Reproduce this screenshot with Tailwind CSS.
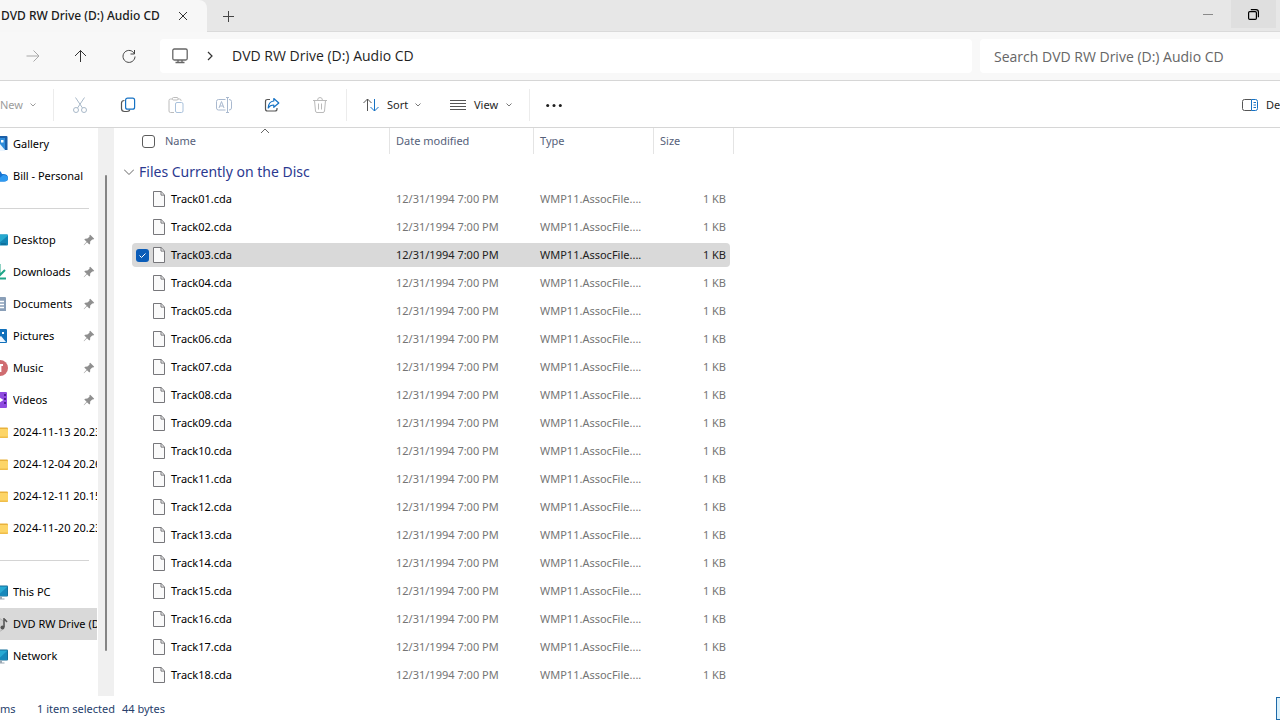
<!DOCTYPE html>
<html lang="en">
<head>
  <meta charset="UTF-8">
  <meta name="viewport" content="width=device-width, initial-scale=1.0">
  <title>DVD RW Drive (D:) Audio CD</title>
  <script src="https://cdn.jsdelivr.net/npm/@tailwindcss/browser@4"></script>
</head>
<body class="h-screen flex flex-col overflow-hidden bg-white text-black text-[11px] leading-4 font-['Noto_Sans','Open_Sans',sans-serif]">

  <!-- Shared icons -->
  <svg class="hidden">
    <symbol id="chev" viewBox="0 0 8 8"><path d="M1.500 2.500 4 5l2.500-2.500" fill="none" stroke="currentColor"/></symbol>
    <symbol id="pin" viewBox="0 0 12 12"><path d="M7.200.8 11.200 4.800 10.200 5.600 9.200 5.500 7.200 7.600 7.100 9.800 6.300 10.600 4 8.200 1 11.200.7 10.900 3.600 7.800 1.300 5.500 2.100 4.700 4.400 4.600 6.500 2.700 6.400 1.600z" fill="#8f8f8f"/></symbol>
    <symbol id="file" viewBox="0 0 14 18"><path d="M1.500 1.500h7.600l3.400 3.400v11.600h-11z" fill="#fafafa" stroke="#77777b"/><path d="M9 1.500v3.600h3.500" fill="none" stroke="#77777b"/></symbol>
    <symbol id="folder" viewBox="0 0 16 16"><path d="M0 3.500h15q1 0 1 1V7H0z" fill="#e9b23c"/><path d="M0 5h15q1 0 1 1v7q0 1-1 1H0z" fill="#fdd567"/><path d="M0 12.500h16q0 1.500-1 1.500H0z" fill="#f0bd4a"/></symbol>
    <symbol id="monitor" viewBox="0 0 16 16"><path d="M0 1.500h15q1 0 1 1v9q0 1-1 1H0z" fill="#156f99"/><path d="M0 2.500h15v9H0z" fill="#27a9d3"/><path d="M6 11.500 15 3v8.500z" fill="#1788bb"/><path d="M5 12.500h5v2h2.500v1H3v-1h2z" fill="#9aa8b3"/></symbol>
  </svg>

  <!-- Tabs -->
  <header class="h-8 shrink-0 flex bg-[#e7e7e7] border-b border-[#dadada]">
    <div class="w-[207px] h-8 flex items-center bg-[#f7f7f7] rounded-tr-lg pl-px">
      <span class="w-[159px] whitespace-nowrap text-[12px] font-medium text-[#1b1b1b]">DVD RW Drive (D:) Audio CD</span>
      <button class="w-12 flex items-center justify-center" aria-label="Close tab">
        <svg class="size-[10px]" viewBox="0 0 10 10" stroke="#333"><path d="M1 1l8 8M9 1 1 9"/></svg>
      </button>
    </div>
    <button class="w-[42px] flex items-center justify-center pt-px" aria-label="New tab">
      <svg class="size-[11px]" viewBox="0 0 11 11" stroke="#444"><path d="M5.500 0v11M0 5.500h11"/></svg>
    </button>
    <div class="ml-auto mr-1 h-7 flex">
      <button class="w-[46px] flex items-center justify-center" aria-label="Minimize">
        <svg class="size-[10px]" viewBox="0 0 10 10" stroke="#8a8a8a"><path d="M0 5.500h10"/></svg>
      </button>
      <button class="w-[45px] flex items-center justify-center bg-[#dfdfdf]" aria-label="Restore">
        <svg class="size-[11px]" viewBox="0 0 11 11" fill="none" stroke="#000" stroke-width="1.200"><rect x=".6" y="2.600" width="7.800" height="7.800" rx="1.200"/><path d="M2.800.6H8Q10.400.6 10.400 3v5.200"/></svg>
      </button>
    </div>
  </header>

  <!-- Navigation and address -->
  <nav class="h-[49px] shrink-0 flex items-center bg-[#f8f8f8] border-b border-[#d6d6d6] text-[14px] font-['Open_Sans','Noto_Sans',sans-serif]">
    <button class="w-8 ml-[17px] flex justify-center" aria-label="Forward">
      <svg class="size-[14px]" viewBox="0 0 14 14" fill="none" stroke="#a8a8a8"><path d="M.5 7h12.500M7.500 1.500 13 7l-5.500 5.500"/></svg>
    </button>
    <button class="w-8 ml-4 flex justify-center" aria-label="Up">
      <svg class="size-[14px]" viewBox="0 0 14 14" fill="none" stroke="#333"><path d="M6.500 13V1.500M1 7l5.500-5.500L12 7"/></svg>
    </button>
    <button class="w-8 ml-4 flex justify-center" aria-label="Refresh">
      <svg class="size-[14px]" viewBox="0 0 14 14" fill="none" stroke="#444"><path d="M12.500 5A6 6 0 1 0 13 7.500M12.500 1v4h-4"/></svg>
    </button>
    <div class="h-[34px] flex-1 ml-[15px] flex items-center bg-white rounded">
      <svg class="size-4 ml-3" viewBox="0 0 16 16" fill="none" stroke="#666"><rect x=".8" y="1" width="14.400" height="11" rx="1.500" stroke-width="1.300"/><path d="M6 12v2.500M10 12v2.500M3.500 14.500h9" stroke-width="1.300"/></svg>
      <svg class="w-[6px] h-[10px] ml-[19px]" viewBox="0 0 6 10" fill="none" stroke="#333" stroke-width="1.200"><path d="M1 1l4 4-4 4"/></svg>
      <span class="ml-[19px] text-[#1f1f1f]">DVD RW Drive (D:) Audio CD</span>
    </div>
    <input type="search" aria-label="Search" placeholder="Search DVD RW Drive (D:) Audio CD" class="h-[34px] w-[300px] ml-2 pl-[14px] bg-white rounded-l placeholder:text-[#666] outline-none">
  </nav>

  <!-- Commands -->
  <div class="h-[47px] shrink-0 flex items-center pt-[2px] border-b border-[#d6d6d6] text-[#1f1f1f]">
    <button class="w-[53px] flex items-center text-[#9c9c9c]"><span class="w-[29px] text-left">New</span><svg class="size-2"><use href="#chev"/></svg></button>
    <div class="w-px h-8 bg-[#ececec]"></div>
    <div class="w-[292px] flex pl-[2px]">
      <button class="w-12 flex justify-center" aria-label="Cut">
        <svg class="size-4" viewBox="0 0 16 16" fill="none" stroke="#a9b9c9"><path d="M3.500.5 10.500 11M12.500.5 5.500 11"/><circle cx="4" cy="13" r="2.500"/><circle cx="12" cy="13" r="2.500"/></svg>
      </button>
      <button class="w-12 flex justify-center" aria-label="Copy">
        <svg class="size-4" viewBox="0 0 16 16" fill="none" stroke-width="1.200"><path d="M4.500 3.500Q1.500 3.500 1.500 6v5.500q0 3 3 3H7q2.500 0 2.800-2" stroke="#555"/><rect x="5.600" y="1.200" width="9" height="11" rx="2" stroke="#1672c4"/></svg>
      </button>
      <button class="w-12 flex justify-center" aria-label="Paste">
        <svg class="size-4" viewBox="0 0 16 16" fill="none"><path d="M4.500 2H2.500Q1 2 1 3.500v10.500q0 1.500 1.500 1.500H6M10 2h1.500Q13 2 13 3.500V4" stroke="#bcbcbc"/><rect x="4.500" y=".5" width="5.500" height="2.500" rx="1" stroke="#bcbcbc"/><rect x="7.500" y="5.500" width="7.500" height="10" rx="1.500" stroke="#a9c1db"/></svg>
      </button>
      <button class="w-12 flex justify-center" aria-label="Rename">
        <svg class="size-4" viewBox="0 0 16 16" fill="none" stroke="#a9b9cf"><path d="M9.500 2.500h-7Q.5 2.500.5 4.500v6.500q0 2 2 2h7M13 2.500q2.500 0 2.500 2v6.500q0 2-2.500 2M11.500.5v15M10 .5h3M10 15.500h3M3 11l2.500-6.500L8 11M4 9h3"/></svg>
      </button>
      <button class="w-12 flex justify-center" aria-label="Share">
        <svg class="size-4" viewBox="0 0 16 16" fill="none" stroke-width="1.200"><path d="M6 2.500H3.500q-2 0-2 2V12q0 2 2 2H11q2 0 2-2v-1" stroke="#555"/><path d="M9.800 1.500 14.800 6l-5 4.300V8Q6 8 4.200 11 4.500 4.500 9.800 4z" stroke="#1672c4" stroke-linejoin="round"/></svg>
      </button>
      <button class="w-12 flex justify-center" aria-label="Delete">
        <svg class="size-4" viewBox="0 0 16 16" fill="none" stroke="#bababa"><path d="M1 3.500h14M5.500 3.500Q5.500.5 8 .5t2.500 3M2.500 3.500l1 10.500q.2 1.500 1.500 1.500h6q1.300 0 1.500-1.500l1-10.500M6.500 6.500v6M9.500 6.500v6"/></svg>
      </button>
    </div>
    <div class="w-px h-8 bg-[#ececec]"></div>
    <button class="w-[87px] flex items-center pl-4">
      <svg class="size-4" viewBox="0 0 16 16" fill="none"><path d="M4.500 14V2M.5 6l4-4 4 4" stroke="#555"/><path d="M11.500 2v12M7.500 10l4 4 4-4" stroke="#1672c4"/></svg>
      <span class="w-[27px] ml-2 text-left">Sort</span><svg class="size-2 text-[#777]"><use href="#chev"/></svg>
    </button>
    <button class="w-[95px] flex items-center pl-4">
      <svg class="size-4" viewBox="0 0 16 16" stroke="#555"><path d="M0 3.500h16M0 6.500h16M0 9.500h16M0 12.500h16"/></svg>
      <span class="w-[31px] ml-2 text-left">View</span><svg class="size-2 text-[#777]"><use href="#chev"/></svg>
    </button>
    <div class="w-px h-8 bg-[#ececec]"></div>
    <button class="ml-4" aria-label="See more">
      <svg class="size-4" viewBox="0 0 16 16" fill="#1f1f1f"><circle cx="1.700" cy="8.500" r="1.500"/><circle cx="8" cy="8.500" r="1.500"/><circle cx="14.300" cy="8.500" r="1.500"/></svg>
    </button>
    <button class="ml-auto w-[38px] overflow-hidden flex items-center gap-2">
      <svg class="size-4 shrink-0" viewBox="0 0 16 16" fill="none"><path d="M9.500 2.500h-7q-2 0-2 2v7q0 2 2 2h7" stroke="#555"/><path d="M9.500 2.500h4q2 0 2 2v7q0 2-2 2h-4zM11.500 5.500h2.500M11.500 8h2.500M11.500 10.500h2.500" stroke="#1672c4"/></svg>
      <span>Details</span>
    </button>
  </div>

  <main class="flex-1 min-h-0 flex">
    <!-- Sidebar -->
    <aside class="w-[97px] shrink-0 overflow-hidden">
      <ul id="places" class="-ml-2"></ul>
    </aside>
    <div class="w-4 ml-px shrink-0 bg-[#f0f0f0] flex justify-center pt-[47px]">
      <div class="w-[2px] h-[476px] bg-[#858585] rounded"></div>
    </div>

    <!-- File list -->
    <section class="flex-1 overflow-hidden">
      <table class="w-[620px] table-fixed text-left border-separate border-spacing-0">
        <thead>
          <tr class="h-[26px] text-[#56617a]">
            <th class="w-[276px] p-0 font-normal border-r border-[#e4e4e4]">
              <div class="relative flex items-center pl-7">
                <input type="checkbox" aria-label="Select all" class="appearance-none size-[13px] border border-[#5c5c5c] rounded-[3px] bg-white">
                <span class="ml-[10px]">Name</span>
                <svg class="absolute left-[146px] -top-[5px] w-[10px] h-[6px]" viewBox="0 0 10 6" fill="none" stroke="#666"><path d="M1 5l4-4 4 4"/></svg>
              </div>
            </th>
            <th class="w-[144px] p-0 pl-[6px] font-normal border-r border-[#e4e4e4]">Date modified</th>
            <th class="w-[120px] p-0 pl-[6px] font-normal border-r border-[#e4e4e4]">Type</th>
            <th class="w-[80px] p-0 pl-[6px] font-normal border-r border-[#e4e4e4]">Size</th>
          </tr>
        </thead>
        <tbody id="tracks">
          <tr class="h-[31px]">
            <td colspan="4" class="p-0">
              <div class="flex items-center pl-[10px] pt-1 text-[14px] leading-5 text-[#2b3990]">
                <svg class="w-[10px] h-[6px] mr-[5px]" viewBox="0 0 10 6" fill="none" stroke="#666"><path d="M0 .5l5 5 5-5"/></svg>
                Files Currently on the Disc
              </div>
            </td>
          </tr>
        </tbody>
      </table>
    </section>
  </main>

  <footer class="h-6 shrink-0 flex items-center pt-px text-[#27406b]">
    <span class="w-[37px]">ms</span>
    <span class="w-[85px] whitespace-nowrap">1 item selected</span>
    <span>44 bytes</span>
    <button class="ml-auto w-1 h-[23px] border border-r-0 border-[#1d69a8] bg-[#d9f0fb]" aria-label="Details view"></button>
  </footer>

<script>
  const icons = {
    gallery: '<path d="M3 0h11.500q1 0 1 1v13H3z" fill="#1a5fa8"/><path d="M0 2h13v13H0z" fill="#2f8ddb"/><path d="M9 4h2.500v2.500H9z" fill="#fff"/><path d="M2 15l6-7 5 6v1z" fill="#e8f4ff"/>',
    cloud: '<path d="M0 4Q7-1 10 6q6-.5 6 4 0 3.500-4 3.500H0z" fill="#1673d1"/><path d="M4 13.500 11 7q5 0 5 3.500 0 3-4 3z" fill="#2f9af0"/>',
    desktop: '<path d="M0 2.500h15q1 0 1 1v9q0 1-1 1H0z" fill="#1285b5"/><path d="M0 2.500h15q1 0 1 1L6 12H0z" fill="#27a9cf"/><path d="M9 12h5" stroke="#0b5f86"/>',
    downloads: '<path d="M7.500 0v11M2 6l5.500 5.500L13 6M1 14.500h13" fill="none" stroke="#1fa587" stroke-width="2"/>',
    documents: '<path d="M1 1h12q1 0 1 1v13H1z" fill="#8a9fb8"/><path d="M7 5.500h5M7 8.500h5M3 11.500h9" stroke="#fff" stroke-width="1.500"/>',
    pictures: '<path d="M0 1h14q1 0 1 1v12q0 1-1 1H0z" fill="#1271bb"/><path d="M10 4h2v2h-2z" fill="#fff"/><path d="M2 14l7-6 5 6z" fill="#eef7ff"/>',
    music: '<circle cx="8" cy="8" r="8" fill="#cf6c70"/><path d="M8 5h3M8.500 4v8" stroke="#fff" stroke-width="1.800"/>',
    videos: '<path d="M0 0h14q1 0 1 1v14q0 1-1 1H0z" fill="#8f4be0"/><path d="M6 4.500l5.500 3.500L6 11.500z" fill="#fff"/><path d="M13 2v12" stroke="#4b1a91" stroke-width="2" stroke-dasharray="2 2"/>',
    disc: '<circle cx="6" cy="9" r="6.500" fill="#d0d0d0" stroke="#b4b4b4"/><path d="M12 2v9M12 2.500l3 3.500" stroke="#555" stroke-width="1.500"/><circle cx="10.500" cy="11.500" r="2" fill="#555"/>',
    folder: '<use href="#folder"/>',
    monitor: '<use href="#monitor"/>'
  };

  const places = [
    ['gallery', 'Gallery'], ['cloud', 'Bill - Personal'], null,
    ['desktop', 'Desktop', true], ['downloads', 'Downloads', true], ['documents', 'Documents', true],
    ['pictures', 'Pictures', true], ['music', 'Music', true], ['videos', 'Videos', true],
    ['folder', '2024-11-13 20.23'], ['folder', '2024-12-04 20.26'],
    ['folder', '2024-12-11 20.15'], ['folder', '2024-11-20 20.23'], null,
    ['monitor', 'This PC'], ['disc', 'DVD RW Drive (D:)'], ['monitor', 'Network']
  ];

  document.getElementById('places').innerHTML = places.map(place => {
    if (!place) return '<li class="h-8 flex items-center mr-2"><hr class="w-full border-[#d4d4d4]"></li>';
    const [icon, label, pinned] = place;
    const active = icon === 'disc' ? 'bg-[#d9d9d9]' : '';
    return `
      <li><a href="#" class="h-8 flex items-center ${active}">
        <svg class="size-4 shrink-0" viewBox="0 0 16 16">${icons[icon]}</svg>
        <span class="flex-1 ml-[5px] whitespace-nowrap overflow-hidden">${label}</span>
        ${pinned ? '<svg class="size-3 mr-[2px] shrink-0"><use href="#pin"/></svg>' : ''}
      </a></li>`;
  }).join('');

  // Track rows, the third one is selected
  const tbody = document.getElementById('tracks');
  for (let i = 1; i <= 18; i++) {
    const name = `Track${String(i).padStart(2, '0')}.cda`;
    const selected = i === 3;
    const bg = selected ? 'bg-[#d9d9d9]' : '';
    const tr = document.createElement('tr');
    tr.className = selected ? 'h-7 text-[#222]' : 'h-7 text-[#757575]';
    tr.innerHTML = `
      <td class="p-0"><div class="h-6 ml-[18px] flex items-center rounded-l-sm text-black ${bg}">
        <span class="w-[20px] pl-1">${selected ? `<label class="relative block size-[13px]"><input type="checkbox" checked aria-label="${name}" class="block appearance-none size-[13px] rounded-[3px] bg-[#0a5cb8]"><svg class="absolute inset-0 size-[13px]" viewBox="0 0 13 13" fill="none" stroke="#fff"><path d="M3.500 6.500l2 2 4-4"/></svg></label>` : ''}</span>
        <svg class="w-[14px] h-[18px]"><use href="#file"/></svg>
        <span class="ml-[5px]">${name}</span>
      </div></td>
      <td class="p-0"><div class="h-6 pl-[6px] flex items-center ${bg}">12/31/1994 7:00 PM</div></td>
      <td class="p-0"><div class="h-6 pl-[6px] flex items-center ${bg}">WMP11.AssocFile....</div></td>
      <td class="p-0"><div class="h-6 mr-1 pr-1 flex items-center justify-end rounded-r-sm ${bg}">1 KB</div></td>`;
    tbody.appendChild(tr);
  }
</script>
</body>
</html>
